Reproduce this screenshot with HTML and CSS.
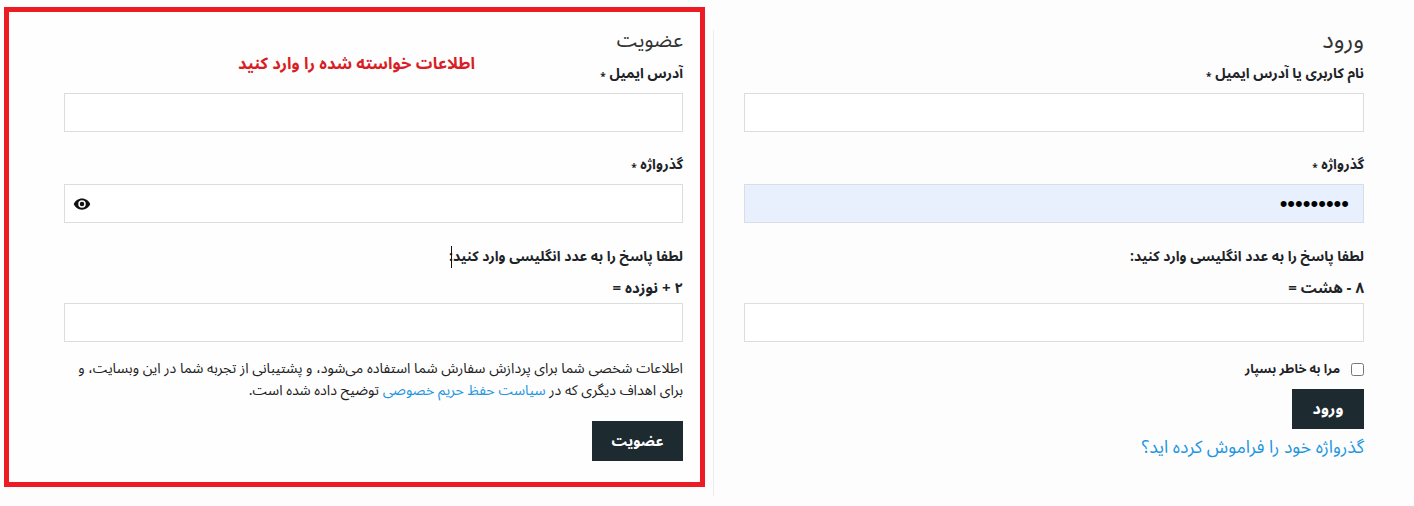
FILE: index.html
```html
<!DOCTYPE html>
<html lang="fa" dir="rtl">
<head>
  <meta charset="UTF-8" />
  <title>ورود / عضویت</title>
  <link rel="stylesheet" href="styles.css">
</head>
<body>
  <div class="account-row">
    <!-- Login -->
    <section class="login-col">
      <h2>ورود</h2>
      <form>
        <label class="field-label first">نام کاربری یا آدرس ایمیل <span class="req">*</span></label>
        <input type="text" />
        <label class="field-label">گذرواژه <span class="req">*</span></label>
        <input type="password" class="autofilled" value="123456789" />
        <p class="captcha-hint">لطفا پاسخ را به عدد انگلیسی وارد کنید:</p>
        <p class="captcha-question">۸ − هشت =</p>
        <input type="text" />
        <label class="remember"><input type="checkbox" /> مرا به خاطر بسپار</label>
        <button type="button" class="btn btn-login">ورود</button>
        <a href="#" class="lost-link">گذرواژه خود را فراموش کرده اید؟</a>
      </form>
    </section>

    <!-- Register, framed in red -->
    <section class="register-col">
      <h2>عضویت</h2>
      <div class="error-note">اطلاعات خواسته شده را وارد کنید</div>
      <form>
        <label class="field-label first">آدرس ایمیل <span class="req">*</span></label>
        <input type="email" />
        <label class="field-label">گذرواژه <span class="req">*</span></label>
        <div class="password-wrap">
          <input type="password" />
          <svg class="eye" viewBox="0 0 24 24" width="18" height="18" aria-hidden="true">
            <path fill="#111" d="M12 4.5C7 4.5 2.7 7.6 1 12c1.700 4.400 6 7.500 11 7.500s9.300-3.100 11-7.500c-1.700-4.400-6-7.500-11-7.500zm0 12.500a5 5 0 1 1 0-10 5 5 0 0 1 0 10zm0-8a3 3 0 1 0 0 6 3 3 0 0 0 0-6z"/>
          </svg>
        </div>
        <p class="captcha-hint caret-host">لطفا پاسخ را به عدد انگلیسی وارد کنید:<span class="caret"></span></p>
        <p class="captcha-question">۲ + نوزده =</p>
        <input type="text" />
        <p class="privacy">اطلاعات شخصی شما برای پردازش سفارش شما استفاده می‌شود، و پشتیبانی از تجربه شما در این وبسایت، و برای اهداف دیگری که در <a href="#">سیاست حفظ حریم خصوصی</a> توضیح داده شده است.</p>
        <button type="button" class="btn btn-register">عضویت</button>
      </form>
    </section>
  </div>
</body>
</html>
```

FILE: styles.css
```css
* {
  box-sizing: border-box;
}

body {
  margin: 0;
  background: #fdfdfd;
  color: #1d2327;
  font-family: "Noto Sans Arabic", "DejaVu Sans", sans-serif;
  font-size: 14px;
}

.account-row {
  display: flex;
  align-items: flex-start;
  height: 506px;
  overflow: hidden;
}

/* Columns */
.login-col {
  width: 701px;
  height: 466px;
  margin-top: 30px;
  padding: 0 50px 0 30px;
  border-left: 1px solid #ececec;
}

.register-col {
  position: relative;
  width: 701px;
  height: 480px;
  margin: 7px 8px 0 0;
  padding: 18px 17px 0 0;
  border: 5px solid #ed1c24;
  background: #fefefe;
}

.register-col form {
  width: 619px;
}

h2 {
  margin: 0;
  height: 22px;
  font-size: 24px;
  font-weight: 400;
  line-height: 22px;
  color: #333;
}

.register-col h2 {
  font-size: 20px;
}

/* Form bits */
.field-label {
  display: block;
  margin: 24px 0 10px;
  height: 18px;
  font-weight: 700;
  line-height: 18px;
}

.field-label.first {
  margin-top: 13px;
}

.req {
  font-size: 10px;
  vertical-align: -2px;
}

input[type="text"],
input[type="email"],
input[type="password"] {
  display: block;
  width: 100%;
  height: 39px;
  padding: 0 14px;
  border: 1px solid #ddd;
  background: #fff;
  font-size: 12px;
}

input.autofilled[type="password"] {
  background: #e8f0fe;
  border-color: #d9dee6;
  color: #000;
  font-size: 22px;
}

.password-wrap {
  position: relative;
}

.eye {
  position: absolute;
  left: 9px;
  top: 11px;
}

.captcha-hint {
  margin: 24px 0 0;
  height: 20px;
  font-weight: 700;
  line-height: 20px;
}

.caret-host {
  position: relative;
}

.caret {
  position: absolute;
  left: 387px;
  top: -1px;
  width: 1px;
  height: 22px;
  background: #111;
}

.captcha-question {
  margin: 11px 0 5px;
  height: 20px;
  font-size: 15px;
  font-weight: 700;
  line-height: 20px;
}

.remember {
  display: flex;
  align-items: center;
  gap: 11px;
  margin-top: 19px;
  height: 16px;
  font-size: 12.6px;
  font-weight: 700;
}

.remember input {
  margin: 0;
  width: 13px;
  height: 13px;
}

.privacy {
  margin: 15px 0 20px;
  font-size: 14.2px;
  line-height: 22px;
  color: #222;
}

.privacy a,
.lost-link {
  color: #1e96e0;
  text-decoration: none;
}

.btn {
  display: block;
  height: 40px;
  border: none;
  background: #1d2a30;
  color: #fff;
  font-family: inherit;
  font-weight: 700;
  cursor: pointer;
}

.btn-login {
  width: 72px;
  margin-top: 12px;
  font-size: 16px;
}

.btn-register {
  width: 91px;
  font-size: 14.5px;
}

.lost-link {
  display: block;
  margin-top: 9px;
  font-size: 17.7px;
  line-height: 20px;
}

/* Sits over the form, above the first label */
.error-note {
  position: absolute;
  top: 42px;
  left: 229px;
  color: #d91f26;
  font-size: 16.5px;
  font-weight: 700;
  line-height: 20px;
}
```
